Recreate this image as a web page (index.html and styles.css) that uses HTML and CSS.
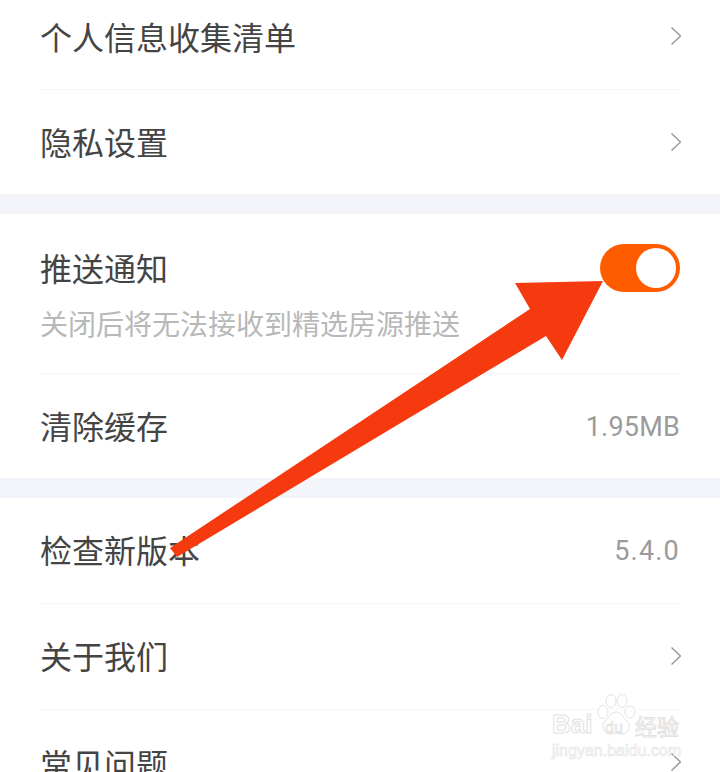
FILE: index.html
```html
<!DOCTYPE html>
<html lang="zh">
<head>
<meta charset="utf-8">
<title>设置</title>
<link rel="stylesheet" href="styles.css">
</head>
<body>
<main class="page">
  <section class="group">
    <div class="row row-first"><span class="label">个人信息收集清单</span><svg class="chev" viewBox="0 0 10 18"><path d="M.5 .5l9 8.5-9 8.5"/></svg></div>
    <div class="row row-plain"><span class="label">隐私设置</span><svg class="chev" viewBox="0 0 10 18"><path d="M.5 .5l9 8.5-9 8.5"/></svg></div>
  </section>
  <section class="group">
    <div class="row row-push">
      <div class="push-text"><span class="label">推送通知</span><span class="sub">关闭后将无法接收到精选房源推送</span></div>
      <div class="toggle"><span class="knob"></span></div>
    </div>
    <div class="row row-plain"><span class="label">清除缓存</span><span class="value value-size">1.95MB</span></div>
  </section>
  <section class="group">
    <div class="row row-std"><span class="label">检查新版本</span><span class="value value-ver">5.4.0</span></div>
    <div class="row row-std"><span class="label">关于我们</span><svg class="chev" viewBox="0 0 10 18"><path d="M.5 .5l9 8.5-9 8.5"/></svg></div>
    <div class="row row-last"><span class="label">常见问题</span><svg class="chev chev-last" viewBox="0 0 10 18"><path d="M.5 .5l9 8.5-9 8.5"/></svg></div>
  </section>
</main>
<svg class="arrow" viewBox="0 0 720 772"><polygon points="603,281 515,283 530,309 170,548 177,557 546,336 562,360"/></svg>
<div class="mark">
  <svg class="paw" viewBox="0 0 40 42"><g fill="#fff" stroke="#e2e2e2" stroke-width="1"><ellipse cx="7" cy="18" rx="5" ry="6.5"/><ellipse cx="15" cy="7" rx="5" ry="6.5"/><ellipse cx="26" cy="7" rx="5" ry="6.5"/><ellipse cx="34" cy="18" rx="5" ry="6"/><path d="M20 18c6 0 7 6 11 9 4 4 2 13-5 13-3 0-4-1-6-1s-3 1-6 1c-7 0-9-9-5-13 4-3 5-9 11-9z"/></g></svg>
  <span class="mark-bai">Bai</span><span class="mark-du">du</span><span class="mark-cn">经验</span>
  <span class="mark-url">jingyan.baidu.com</span>
</div>
</body>
</html>
```
FILE: styles.css
```css
html, body { margin: 0; padding: 0; }
body { width: 720px; height: 772px; overflow: hidden; background: #fff; position: relative; font-family: "Noto Sans CJK SC", "Liberation Sans", sans-serif; }
.page { display: flex; flex-direction: column; gap: 20px; background: #f3f5fa; }
.group { background: #fff; padding: 0 40px; display: flex; flex-direction: column; }
.row { display: flex; align-items: center; justify-content: space-between; border-bottom: 1px solid #f7f7f7; box-sizing: border-box; }
.row-first { height: 90px; padding-bottom: 18px; }
.row-plain { height: 104px; border-bottom: 0; padding-bottom: 2px; }
.row-push { height: 160px; align-items: flex-start; padding-top: 28px; }
.row-std { height: 106px; padding-bottom: 3px; }
.row-last { height: 70px; border-bottom: 0; align-items: flex-start; padding-top: 28px; }
.label { font-size: 32px; line-height: 50px; color: #444; }
.push-text { display: flex; flex-direction: column; }
.sub { font-size: 28px; line-height: 40px; color: #b8b8b8; margin-top: 11px; }
.value { font-family: Roboto, "Liberation Sans", sans-serif; font-size: 27px; color: #9b9b9b; position: relative; top: 2px; }
.value-size { letter-spacing: 0.2px; }
.value-ver { letter-spacing: 1.2px; }
.chev { width: 10px; height: 18px; fill: none; stroke: #9a9a9a; stroke-width: 1.5; margin-right: -1px; }
.row-plain .chev, .row-std .chev { margin-top: 2px; }
.chev-last { margin-top: 15px; }
.toggle { width: 80px; height: 48px; border-radius: 24px; background: #ff5c00; display: flex; align-items: center; justify-content: flex-end; padding-right: 4px; box-sizing: border-box; margin-top: 2px; }
.knob { width: 40px; height: 40px; border-radius: 50%; background: #fff; }
.arrow { position: absolute; left: 0; top: 0; width: 720px; height: 772px; }
.arrow polygon { fill: #f63a10; }
.mark { position: absolute; left: 552px; top: 694px; width: 168px; height: 78px; }
.paw { position: absolute; left: 44px; top: 0; width: 40px; height: 42px; }
.mark-bai, .mark-du, .mark-cn, .mark-url { position: absolute; font-family: "Liberation Sans", sans-serif; color: #fff; -webkit-text-stroke: 1px #e2e2e2; white-space: nowrap; }
.mark-bai { left: 0; top: 15px; font-size: 26px; font-weight: 700; }
.mark-du { left: 53px; top: 25px; font-size: 16px; z-index: 1; -webkit-text-stroke: 0.6px #d8d8d8; }
.mark-cn { left: 83px; top: 15px; font-size: 22px; font-family: "Noto Sans CJK SC", sans-serif; }
.mark-url { left: 0; top: 48px; font-size: 16px; -webkit-text-stroke: 0.6px #e2e2e2; }
```
